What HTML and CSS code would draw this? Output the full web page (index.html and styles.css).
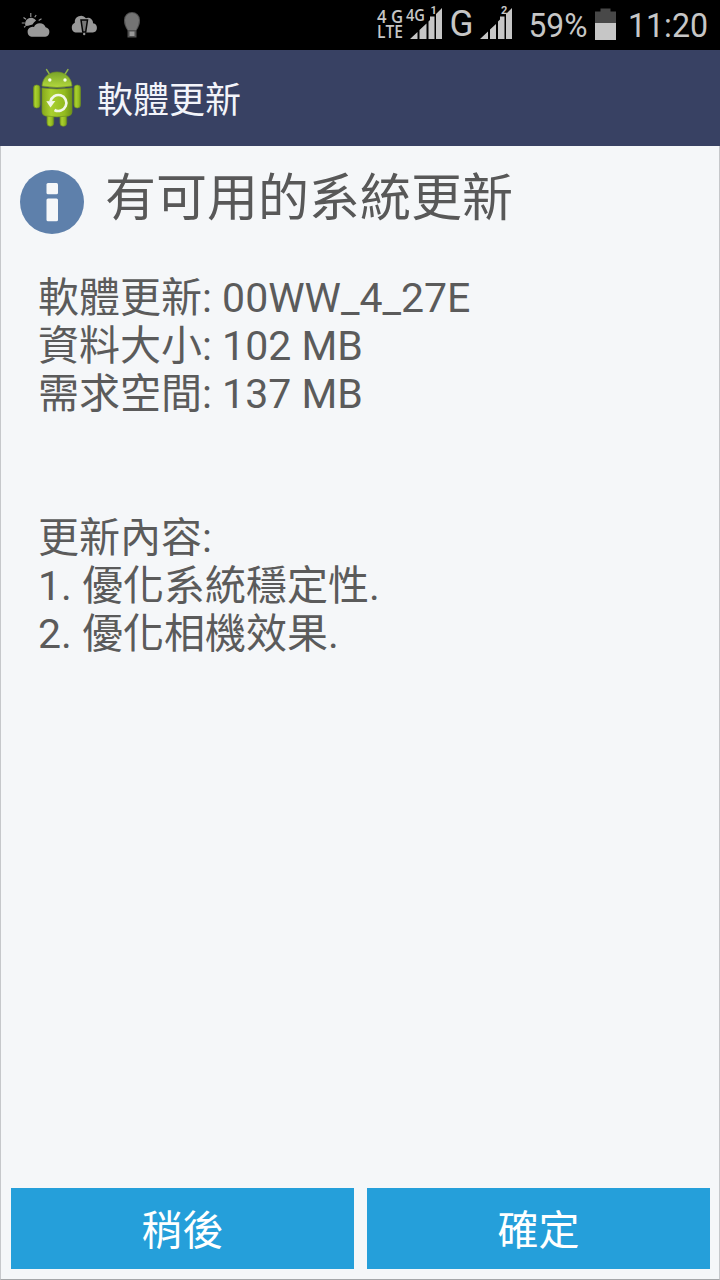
FILE: index.html
```html
<!DOCTYPE html>
<html lang="zh-Hant">
<head>
<meta charset="utf-8">
<title>軟體更新</title>
<link rel="stylesheet" href="styles.css">
</head>
<body>
<div class="screen">
  <header class="status">
    <svg class="status-notices" width="160" height="50" viewBox="0 0 160 50">
      <g fill="#999">
        <path d="M25.500 26a6 6 0 0 1 10.600-5.500l-2 1.800-1.600 2.200-4.500 1.200z"/>
        <path d="M23.500 17.500l2.500 1.800M21.800 23h3M24 27.200l1.500-1M30.800 13v4M36.200 15l-1.500 2.300M41.500 18.800l-2.800 1.700" stroke="#999" stroke-width="1.100"/>
        <path d="M31.500 36.800a5 5 0 0 1-.8-9.500q1.800-.8 3.300-.3a6.300 6.300 0 0 1 11.600.2 4.900 4.900 0 0 1-.3 9.600z"/>
        <path d="M75.500 32.500a5.200 5.200 0 0 1-.7-9.700 6.300 6.300 0 0 1 11.200-4.600 5 5 0 0 1 7 5 4.700 4.700 0 0 1-.2 9.300z"/>
        <path d="M81 20h6.500l-1.800 12h-2.900z" fill="#777" stroke="#050505" stroke-width="1.500"/>
        <circle cx="84.200" cy="34" r="1.200"/>
      </g>
      <path d="M127.500 37.500v-7q-3.800-5.500-3.500-10.500a8 8 0 0 1 16 0q.3 5-3.500 10.500v7z" fill="#505050"/>
      <path d="M128 30q-3-5-3-10a7 7 0 0 1 14 0q0 5-3 10z" fill="#747474"/>
      <path d="M129.500 31.500h5v4.500h-5z" fill="#999"/>
    </svg>
    <svg class="status-system" width="350" height="50" viewBox="370 0 350 50" fill="#c6c6c6">
      <text class="net" x="377" y="22.500" font-size="18" textLength="26" lengthAdjust="spacingAndGlyphs">4 G</text>
      <text class="net" x="377" y="38" font-size="18.500" textLength="26" lengthAdjust="spacingAndGlyphs">LTE</text>
      <text class="net" x="406" y="20.500" font-size="17" textLength="19" lengthAdjust="spacingAndGlyphs">4G</text>
      <text class="sim" x="430.500" y="14" font-size="11">1</text>
      <path d="M410 39l7.500-7v7zM419.500 39v-9l7-6.500V39zM428.500 39V21.500l1.500-1.400v-3.500h4.500V39zM436 39V14l6-6v31z"/>
      <text x="449.500" y="36" font-size="36" textLength="24" lengthAdjust="spacingAndGlyphs">G</text>
      <path d="M480 39l8-7.500V39zM490 39v-9.500l6-5.500v15zM498 39V21.500l2-1.900v-3.100h4.500V39zM506 39V14l6-6v31z"/>
      <text class="sim" x="501" y="14" font-size="11">2</text>
      <text x="528.500" y="37" font-size="33" textLength="59" lengthAdjust="spacingAndGlyphs">59%</text>
      <path d="M595 23V11.500h5.500V8.500h10v3h5.500V23z" fill="#484848"/>
      <path d="M595 23h21v17h-21z"/>
      <text x="628" y="37" font-size="33" textLength="80" lengthAdjust="spacingAndGlyphs">11:20</text>
    </svg>
  </header>

  <div class="appbar">
    <svg class="robot" width="50" height="60" viewBox="32 68 50 60">
      <defs>
        <linearGradient id="body" x1="0" x2="1">
          <stop offset="0" stop-color="#86a81c"/><stop offset=".3" stop-color="#a9d02f"/>
          <stop offset=".75" stop-color="#93bb20"/><stop offset="1" stop-color="#6f9416"/>
        </linearGradient>
        <linearGradient id="head" x1="0" x2="0" y1="0" y2="1">
          <stop offset="0" stop-color="#79a429"/><stop offset="1" stop-color="#b3d93d"/>
        </linearGradient>
      </defs>
      <path d="M46.500 69.500l3.200 5M68 69.500l-3.200 5" stroke="#8fb34a" stroke-width="1.400" stroke-linecap="round"/>
      <g fill="url(#body)" stroke="#719222" stroke-width=".7">
        <rect x="47" y="113" width="6.700" height="13.300" rx="3.300"/>
        <rect x="60" y="113" width="6.700" height="13.300" rx="3.300"/>
        <rect x="33.500" y="85" width="6.500" height="23" rx="3.200"/>
        <rect x="74" y="85" width="6.500" height="23" rx="3.200"/>
        <path d="M42 88q15 2 30 0V112q0 3-3.500 4-11.500 1.800-23 0-3.500-1-3.500-4z"/>
        <path d="M42 86c.5-8.500 7-14 15-14s14.500 5.500 15 14q-15 3-30 0z" fill="url(#head)"/>
      </g>
      <circle cx="49.800" cy="80" r="1.700" fill="#f6ffe8"/><circle cx="65" cy="80" r="1.700" fill="#f6ffe8"/>
      <path d="M50.500 101.500a8 8 0 1 1 4 8.500" fill="none" stroke="#f2f7e8" stroke-width="2.600"/>
      <path d="M46.300 101.300l9-.3-4.800 6.400z" fill="#f2f7e8"/>
    </svg>
    <h1 class="appbar-title">軟體更新</h1>
  </div>

  <main class="content">
    <div class="heading">
      <svg class="info" width="64" height="64" viewBox="0 0 64 64">
        <circle cx="32" cy="32" r="32" fill="#5e80ab"/>
        <rect x="26.500" y="13" width="11.500" height="11.200" rx="1.500" fill="#f5f7f9"/>
        <rect x="26.500" y="28.500" width="11.500" height="22.700" rx="1.500" fill="#f5f7f9"/>
      </svg>
      <h2 class="heading-text">有可用的系統更新</h2>
    </div>
    <div class="details">
      <p>軟體更新: 00WW_4_27E</p>
      <p>資料大小: 102 MB</p>
      <p>需求空間: 137 MB</p>
    </div>
    <div class="details changes">
      <p>更新內容:</p>
      <p>1. 優化系統穩定性.</p>
      <p>2. 優化相機效果.</p>
    </div>
    <div class="actions">
      <button class="action">稍後</button>
      <button class="action">確定</button>
    </div>
  </main>
</div>
</body>
</html>
```
FILE: styles.css
```css
* {
  box-sizing: border-box;
}

body,
h1,
h2,
p {
  margin: 0;
  font-weight: 400;
}

body {
  font-family: Roboto, "Noto Sans CJK TC", sans-serif;
}

.screen {
  display: flex;
  flex-direction: column;
  width: 720px;
  height: 1280px;
  overflow: hidden;
}

.status {
  display: flex;
  justify-content: space-between;
  height: 50px;
  background: #000;
}

.status svg {
  display: block;
}

.net {
  font-family: "Open Sans", sans-serif;
  font-weight: 600;
}

.sim {
  font-weight: 700;
}

.appbar {
  display: flex;
  align-items: center;
  gap: 15px;
  height: 96px;
  padding-left: 32px;
  background: #384163;
}

.appbar-title {
  padding-top: 5px;
  color: #f3f4fa;
  font-size: 36px;
  line-height: 48px;
}

.content {
  display: flex;
  flex: 1;
  flex-direction: column;
  padding: 0 9px 10px 10px;
  background: #f5f7f9;
  border: 1px solid #c6c8cb;
  border-top: 0;
  border-bottom-color: #a5a7a9;
}

.heading {
  display: flex;
  gap: 21px;
  height: 128px;
  padding: 24px 0 0 9px;
}

.heading-text {
  margin-top: -5px;
  color: #585858;
  font-size: 51px;
  line-height: 68px;
}

.details {
  padding-left: 27px;
  color: #5b5b5b;
  font-size: 41px;
  line-height: 48px;
  white-space: nowrap;
}

.changes {
  margin-top: 96px;
}

.actions {
  display: grid;
  grid-template-columns: 1fr 1fr;
  gap: 13px;
  margin-top: auto;
}

.action {
  height: 81px;
  padding: 0 0 3px;
  border: 0;
  background: #259fda;
  color: #fff;
  font: inherit;
  font-size: 41px;
}
```
